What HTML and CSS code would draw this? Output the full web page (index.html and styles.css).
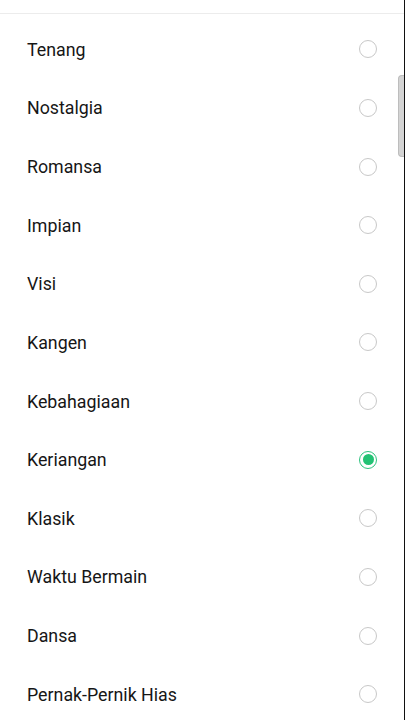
FILE: index.html
```html
<!DOCTYPE html>
<html>
<head>
<meta charset="utf-8">
<link rel="stylesheet" href="styles.css">
</head>
<body>
<div class="screen">
  <div class="topbar"></div>
  <ul class="list">
    <li class="row"><span class="label">Tenang</span><span class="radio"></span></li>
    <li class="row"><span class="label">Nostalgia</span><span class="radio"></span></li>
    <li class="row"><span class="label">Romansa</span><span class="radio"></span></li>
    <li class="row"><span class="label">Impian</span><span class="radio"></span></li>
    <li class="row"><span class="label">Visi</span><span class="radio"></span></li>
    <li class="row"><span class="label">Kangen</span><span class="radio"></span></li>
    <li class="row"><span class="label">Kebahagiaan</span><span class="radio"></span></li>
    <li class="row"><span class="label">Keriangan</span><span class="radio checked"></span></li>
    <li class="row"><span class="label">Klasik</span><span class="radio"></span></li>
    <li class="row"><span class="label">Waktu Bermain</span><span class="radio"></span></li>
    <li class="row"><span class="label">Dansa</span><span class="radio"></span></li>
    <li class="row"><span class="label">Pernak-Pernik Hias</span><span class="radio"></span></li>
  </ul>
  <div class="scrollthumb"></div>
  <div class="edge"></div>
</div>
</body>
</html>
```
FILE: styles.css
```css
html, body {
  margin: 0;
  padding: 0;
  background: #ffffff;
}
.screen {
  position: relative;
  width: 405px;
  height: 720px;
  overflow: hidden;
  font-family: Roboto, "Noto Sans", sans-serif;
  color: #161616;
}
.topbar {
  height: 13px;
  border-bottom: 1px solid #ececec;
}
.list {
  list-style: none;
  margin: 0;
  padding: 6px 0 0 0;
}
.row {
  height: 58.64px;
  display: flex;
  align-items: center;
  justify-content: space-between;
  padding: 0 27px 0 27px;
}
.label {
  font-size: 17.8px;
}
.radio {
  box-sizing: border-box;
  width: 18px;
  height: 18px;
  border-radius: 50%;
  border: 1.5px solid #c8c8c8;
  margin-right: 1px;
  display: flex;
  align-items: center;
  justify-content: center;
}
.radio.checked {
  border: 1.5px solid #2ec27e;
}
.radio.checked::after {
  content: "";
  width: 11px;
  height: 11px;
  border-radius: 50%;
  background: #23c274;
}
.scrollthumb {
  position: absolute;
  right: 1px;
  top: 75px;
  width: 6px;
  height: 82px;
  background: #d4d4d4;
  border: 1px solid #bdbdbd;
  border-right: none;
  border-radius: 4px 0 0 4px;
  box-sizing: border-box;
}
.edge {
  position: absolute;
  right: 0;
  top: 0;
  width: 1px;
  height: 720px;
  background: #111;
}
```
